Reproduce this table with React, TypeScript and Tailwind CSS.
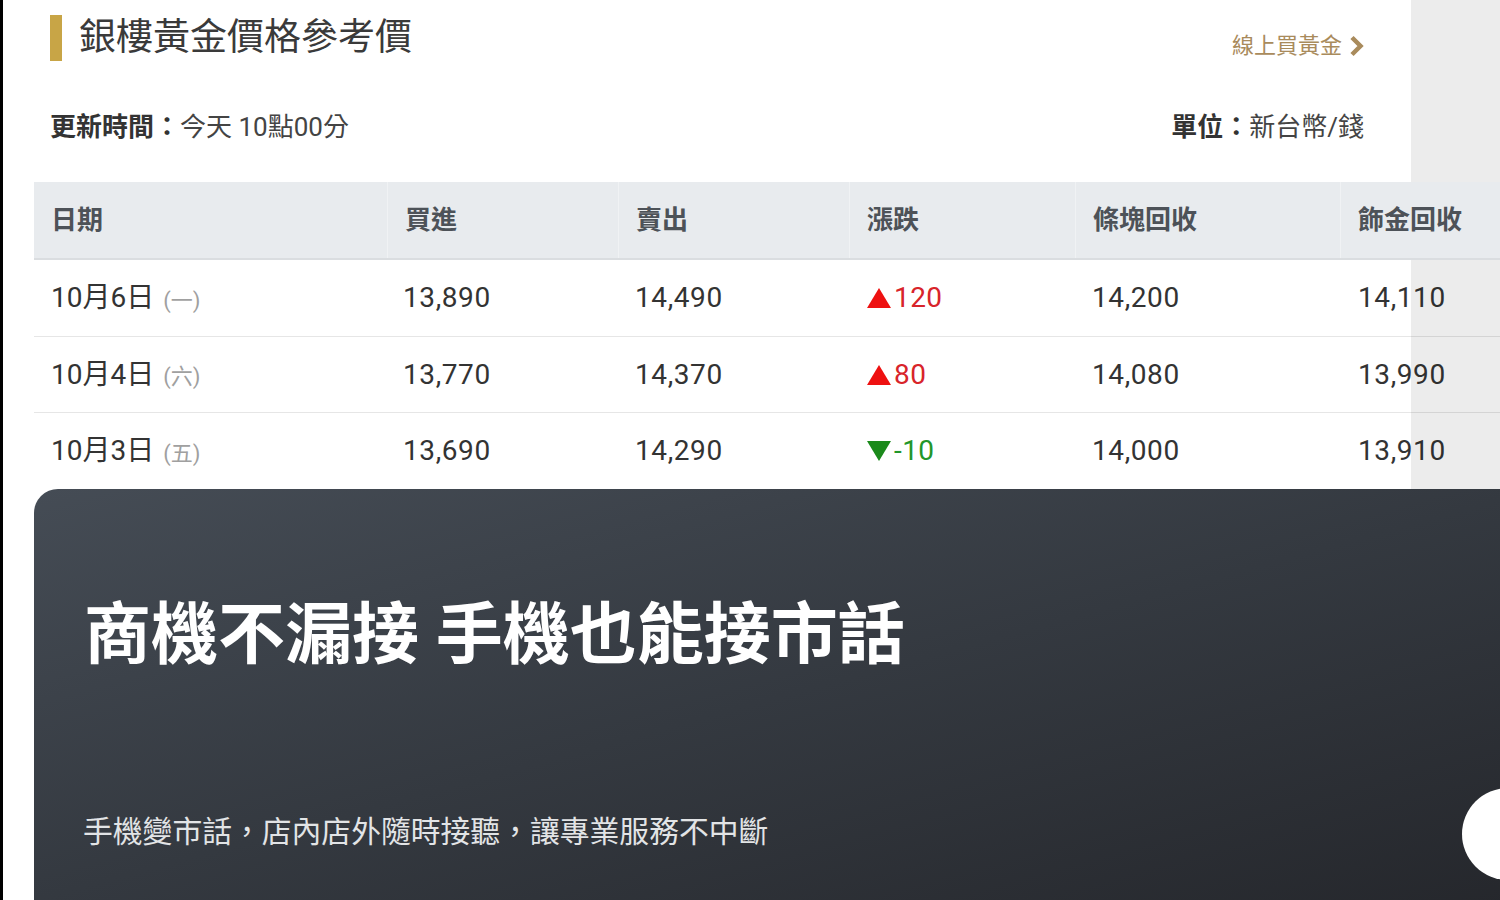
import React from "react";

const FONT = { fontFamily: "Roboto, 'Noto Sans CJK TC', 'Noto Sans', sans-serif" };

type Row = { date: string; wd: string; buy: string; sell: string; dir: "up" | "down"; chg: string; bar: string; orn: string };

const rows: Row[] = [
  { date: "10月6日", wd: "(一)", buy: "13,890", sell: "14,490", dir: "up", chg: "120", bar: "14,200", orn: "14,110" },
  { date: "10月4日", wd: "(六)", buy: "13,770", sell: "14,370", dir: "up", chg: "80", bar: "14,080", orn: "13,990" },
  { date: "10月3日", wd: "(五)", buy: "13,690", sell: "14,290", dir: "down", chg: "-10", bar: "14,000", orn: "13,910" },
];

const cols = "grid grid-cols-[353px_231px_231px_226px_265px_1fr]";

export default function App() {
  return (
    <div className="relative w-[1500px] h-[900px] overflow-hidden bg-white flex" style={FONT}>
      <div className="w-[3px] h-full bg-black shrink-0" />
      <div className="flex-1 flex flex-col pl-[31px]">
        {/* top section */}
        <div className="h-[182px] pl-[16px] pr-[136px]">
          <div className="flex justify-between pt-[15px]">
            <div className="flex items-center gap-[17px]">
              <div className="w-[12px] h-[46px] bg-[#c8a546]" />
              <span className="text-[37px] leading-[46px] text-[#3a3a3a] -mt-[1px]">銀樓黃金價格參考價</span>
            </div>
            <div className="mt-[15px] flex items-center gap-[7px] text-[22px] leading-[26px] text-[#a98b5c]">
              <span>線上買黃金</span>
              <svg width="15" height="22" viewBox="0 0 15 22">
                <path d="M3 2.5 L11.5 11 L3 19.5" fill="none" stroke="#a98b5c" strokeWidth="4.5" strokeLinejoin="miter" />
              </svg>
            </div>
          </div>
          <div className="flex justify-between mt-[49px] text-[26px] leading-[34px] text-[#3a3a3a]">
            <div>
              <span className="font-bold text-[#333]">更新時間：</span>
              <span className="text-[#444]">今天 10點00分</span>
            </div>
            <div>
              <span className="font-bold text-[#333]">單位：</span>
              <span className="text-[#444]">新台幣/錢</span>
            </div>
          </div>
        </div>

        {/* table */}
        <div className="w-[1466px]">
          <div className={`${cols} relative z-20 h-[78px] bg-[#e8ebee] border-b-2 border-[#dadde0] text-[26px] font-bold text-[#4d5258]`}>
            {["日期", "買進", "賣出", "漲跌", "條塊回收", "飾金回收"].map((h, i) => (
              <div key={h} className={`flex items-center pl-[17px] ${i > 0 ? "border-l border-[#f0f2f4]" : ""}`}>
                {h}
              </div>
            ))}
          </div>
          {rows.map((r, idx) => (
            <div
              key={r.date}
              className={`${cols} ${idx === 0 ? "h-[77px]" : "h-[76px]"} text-[28px] text-[#333] ${idx < rows.length - 1 ? "border-b border-[#e6e6e6]" : ""}`}
            >
              <div className="flex items-center pl-[17px]">
                <span>{r.date}</span>
                <span className="ml-[9px] text-[22px] text-[#a0a0a0] mt-[4px]">{r.wd}</span>
              </div>
              <div className="flex items-center pl-[16px] tracking-[0.6px]">{r.buy}</div>
              <div className="flex items-center pl-[17px] tracking-[0.6px]">{r.sell}</div>
              <div className={`flex items-center pl-[17px] tracking-[0.4px] ${r.dir === "up" ? "text-[#d8242a]" : "text-[#22962a]"}`}>
                <svg width="26" height="22" viewBox="0 0 26 22" className="mr-[2px]">
                  {r.dir === "up" ? (
                    <path d="M13 1 L25 21 L1 21 Z" fill="#ee1111" />
                  ) : (
                    <path d="M1 1 L25 1 L13 21 Z" fill="#1b8a1b" />
                  )}
                </svg>
                <span>{r.chg}</span>
              </div>
              <div className="flex items-center pl-[17px] tracking-[0.6px]">{r.bar}</div>
              <div className="flex items-center pl-[18px] tracking-[0.6px]">{r.orn}</div>
            </div>
          ))}
        </div>

        {/* dark promo card */}
        <div className="flex-1 rounded-tl-[24px] bg-linear-to-br from-[#454c55] via-[#343940] to-[#25272c] pt-[106px] -mr-[40px]">
          <div className="pl-[50px] text-[67px] leading-[80px] font-bold text-white">商機不漏接 手機也能接市話</div>
          <div className="pl-[49px] mt-[137px] text-[29.8px] leading-[40px] text-[#e2e4e6]">手機變市話，店內店外隨時接聽，讓專業服務不中斷</div>
        </div>
      </div>

      {/* right scroll shade */}
      <div className="absolute left-[1411px] top-0 w-[89px] h-[489px] bg-black/[0.075] z-10 pointer-events-none" />
      {/* floating round button */}
      <div className="absolute left-[1462px] top-[788px] w-[92px] h-[92px] rounded-full bg-white z-30" />
    </div>
  );
}
